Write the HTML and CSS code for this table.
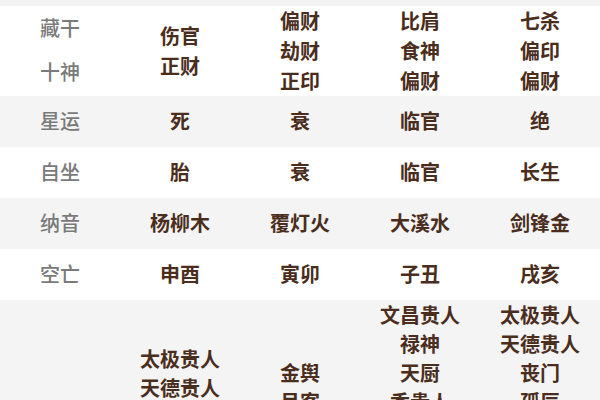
FILE: index.html
```html
<!DOCTYPE html>
<html lang="zh">
<head>
<meta charset="utf-8">
<link rel="stylesheet" href="styles.css">
</head>
<body>
<div class="table">
  <div class="row gray top-strip"></div>
  <div class="row white tall">
    <div class="label stack"><div>藏干</div><div>十神</div></div>
    <div class="cell"><div>伤官</div><div>正财</div></div>
    <div class="cell"><div>偏财</div><div>劫财</div><div>正印</div></div>
    <div class="cell"><div>比肩</div><div>食神</div><div>偏财</div></div>
    <div class="cell"><div>七杀</div><div>偏印</div><div>偏财</div></div>
  </div>
  <div class="row gray single">
    <div class="label">星运</div>
    <div class="cell">死</div>
    <div class="cell">衰</div>
    <div class="cell">临官</div>
    <div class="cell">绝</div>
  </div>
  <div class="row white single">
    <div class="label">自坐</div>
    <div class="cell">胎</div>
    <div class="cell">衰</div>
    <div class="cell">临官</div>
    <div class="cell">长生</div>
  </div>
  <div class="row gray single">
    <div class="label">纳音</div>
    <div class="cell">杨柳木</div>
    <div class="cell">覆灯火</div>
    <div class="cell">大溪水</div>
    <div class="cell">剑锋金</div>
  </div>
  <div class="row white single">
    <div class="label">空亡</div>
    <div class="cell">申酉</div>
    <div class="cell">寅卯</div>
    <div class="cell">子丑</div>
    <div class="cell">戌亥</div>
  </div>
  <div class="row gray multi">
    <div class="label">神煞</div>
    <div class="cell"><div>太极贵人</div><div>天德贵人</div><div>华盖</div><div>劫煞</div><div>白虎</div></div>
    <div class="cell"><div>金舆</div><div>吊客</div><div>披麻</div><div>亡神</div></div>
    <div class="cell"><div>文昌贵人</div><div>禄神</div><div>天厨</div><div>香贵人</div><div>红艳</div><div>学堂</div><div>词馆</div><div>灾煞</div></div>
    <div class="cell"><div>太极贵人</div><div>天德贵人</div><div>丧门</div><div>孤辰</div><div>元辰</div><div>劫煞</div><div>勾绞</div><div>童子</div></div>
  </div>
</div>
</body>
</html>
```
FILE: styles.css
```css
html, body {
  margin: 0;
  padding: 0;
  background: #ffffff;
}
body {
  font-family: "Noto Sans CJK SC", "Noto Sans", sans-serif;
  font-size: 20px;
  width: 600px;
  height: 400px;
  overflow: hidden;
}
.table {
  display: flex;
  flex-direction: column;
}
.row {
  display: grid;
  grid-template-columns: repeat(5, 120px);
  align-items: center;
}
.gray { background: #f4f4f4; }
.white { background: #ffffff; }
.top-strip { height: 6px; }
.label {
  color: #7a7a7a;
  font-weight: 500;
  text-align: center;
}
.cell {
  color: #4a2d1c;
  font-weight: 700;
  text-align: center;
}
.tall { height: 90px; line-height: 30px; }
.tall .stack { line-height: 44px; margin-top: -2px; }
.single { line-height: 30px; padding: 10px 0 11px; }
.multi { line-height: 29px; }
```
